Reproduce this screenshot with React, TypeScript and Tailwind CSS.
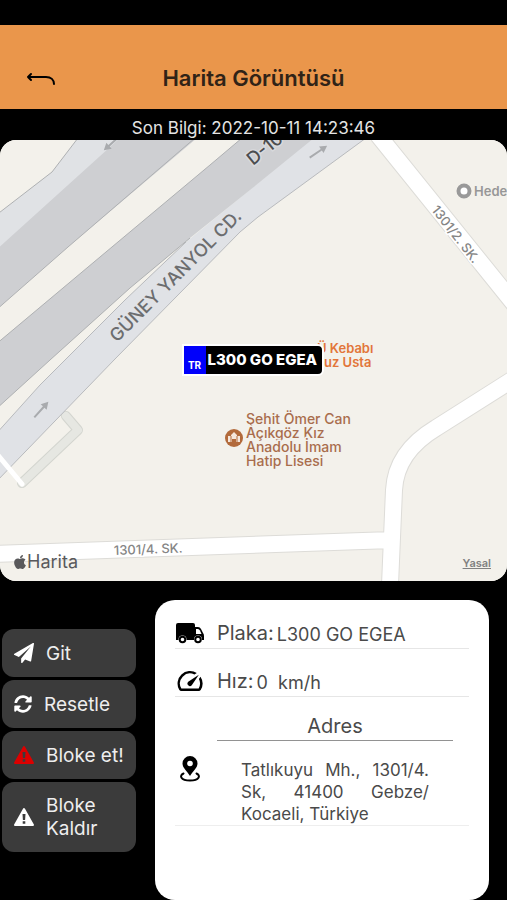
import type { ReactNode } from 'react'
import { FaSyncAlt } from 'react-icons/fa'
import { MdSpeed } from 'react-icons/md'

interface Vehicle {
  plate: string
  country: string
  speed: number
  address: string[]
  updatedAt: string
}

const vehicle: Vehicle = {
  plate: 'L300 GO EGEA',
  country: 'TR',
  speed: 0,
  address: ['Tatlıkuyu Mh., 1301/4.', 'Sk, 41400 Gebze/', 'Kocaeli, Türkiye'],
  updatedAt: '2022-10-11 14:23:46',
}

function MapArrow({ x, y, angle }: { x: number; y: number; angle: number }) {
  return (
    <g transform={`translate(${x} ${y}) rotate(${angle})`} fill="#a9abae">
      <path d="M-10-1H4v-3L11 0 4 4V1H-10z" />
    </g>
  )
}

function StreetMap() {
  return (
    <svg
      viewBox="0 0 507 441"
      preserveAspectRatio="xMidYMid slice"
      className="block h-full w-full"
      fontFamily="Inter, sans-serif"
      aria-hidden="true"
    >
      <rect width="507" height="441" fill="#f3f1eb" />

      {/* northern carriageway with its slip road */}
      <path d="M-5 76L52 32 78-2h70L-5 117z" fill="#e0e2e5" />
      <path d="M-5 111L120 -2h77L68 107-5 171z" fill="#cecfd2" />
      <path d="M-5 76L52 32 78-2M-5 171L68 107 195-2" fill="none" stroke="#aeb0b2" />

      {/* parking lane */}
      <path d="M66 276L78 290 22 343" fill="none" stroke="#d3d5cf" strokeWidth="10" strokeLinejoin="round" strokeLinecap="round" />
      <path d="M66 276L78 290 22 343" fill="none" stroke="#e6e7e2" strokeWidth="8" strokeLinejoin="round" strokeLinecap="round" />

      {/* Güney Yanyol */}
      <path d="M-5 295L40 245 70 215 125 160 186 102 313-2h53L258 77 240 92 115 219-5 343z" fill="#e0e2e6" />
      <path d="M366-2L258 77 240 92 115 219-5 343M-5 295L40 245 70 215 125 160 186 102" fill="none" stroke="#b8babd" />

      {/* D-100 */}
      <path d="M-5 205L100 117 210 25 242-2h72L250 50 190 98 130 148 50 220-5 270z" fill="#cecfd2" />
      <path d="M-5 205L100 117 210 25 242-2M-5 270L50 220 130 148 190 98" fill="none" stroke="#aeb0b2" />

      <path d="M-3 314L22 344" stroke="#fff" strokeWidth="5" strokeLinecap="round" />

      {/* side streets */}
      <g fill="none" strokeLinejoin="round">
        <path d="M378-5L515 165M515 238L436 288Q396 312 394 350L390 445M-5 414L392 400" stroke="#dddcd8" strokeWidth="18" />
        <path d="M378-5L515 165M515 238L436 288Q396 312 394 350L390 445M-5 414L392 400" stroke="#fff" strokeWidth="16" />
      </g>

      <MapArrow x={112} y={3} angle={138} />
      <MapArrow x={318} y={12} angle={-34} />
      <MapArrow x={41} y={270} angle={-48} />

      <g stroke="#f3f1eb" strokeWidth="3" paintOrder="stroke">
        <text transform="translate(117 203) rotate(-45)" fontSize="18" fontWeight="500" fill="#6c6d6f" stroke="#e0e2e6">
          GÜNEY YANYOL CD.
        </text>
        <text transform="translate(253 26) rotate(-39)" fontSize="18" fontWeight="500" fill="#4c4d4f" stroke="#d8d9dc">
          D-100
        </text>
        <text transform="translate(431 70) rotate(52)" fontSize="13" fontWeight="500" fill="#858585" stroke="#fff">
          1301/2. SK.
        </text>
        <text transform="translate(114 415) rotate(-2)" fontSize="13" fontWeight="500" fill="#858585" stroke="#fff">
          1301/4. SK.
        </text>
        <text x="474" y="56" fontSize="13" fontWeight="600" fill="#979797">Hedef</text>
        <g fontSize="13" fontWeight="600" fill="#e2763a">
          <text x="317" y="213">Ü Kebabı</text>
          <text x="324" y="227">uz Usta</text>
        </g>
        <g fontSize="14" fontWeight="500" fill="#a96d4d">
          <text x="246" y="284">Şehit Ömer Can</text>
          <text x="246" y="298">Açıkgöz Kız</text>
          <text x="246" y="312">Anadolu İmam</text>
          <text x="246" y="326">Hatip Lisesi</text>
        </g>
      </g>

      <circle cx="464" cy="51" r="5.5" fill="#fff" stroke="#999" strokeWidth="4" />
      <circle cx="234" cy="298" r="9" fill="#b26a3b" />
      <path d="M228 302v-6h3v-1l3-3 3 3v1h3v6h-4v-3h-4v3z" fill="#f5e7dc" />
      <path d="M231 296v6M237 296v6" stroke="#b26a3b" />
    </svg>
  )
}

function AppleMark() {
  return (
    <svg viewBox="0 0 384 512" className="h-4 w-3" fill="currentColor" aria-hidden="true">
      <path d="M318.7 268.7c-.2-36.7 16.4-64.4 50-84.8-18.8-26.9-47.2-41.7-84.7-44.6-35.5-2.8-74.3 20.7-88.5 20.7-15 0-49.4-19.7-76.4-19.7C63.3 141.2 4 184.8 4 273.5q0 39.3 14.4 81.2c12.8 36.7 59 126.7 107.2 125.2 25.2-.6 43-17.9 75.8-17.9 31.8 0 48.3 17.9 76.4 17.9 48.6-.7 90.4-82.5 102.6-119.3-65.2-30.7-61.7-90-61.7-91.9zm-56.6-164.2c27.3-32.4 24.8-61.9 24-72.5-24.1 1.4-52 16.4-67.9 34.9-17.5 19.8-27.8 44.3-25.6 71.9 26.1 2 49.9-11.4 69.5-34.3z" />
    </svg>
  )
}

function PlaneIcon() {
  return (
    <svg viewBox="0 0 1792 1792" className="h-5 w-5" fill="currentColor" aria-hidden="true">
      <path d="M1764 11q33 24 27 64l-256 1536q-5 29-32 45-14 8-31 8-11 0-24-5l-453-185-242 295q-18 23-49 23-13 0-22-4-19-7-30.500-23.500t-11.500-36.500v-349l864-1059-1069 925-395-162q-37-14-40-55-2-40 32-59l1664-960q15-9 32-9 20 0 36 11z" />
    </svg>
  )
}

function WarningIcon() {
  return (
    <svg viewBox="0 0 20 20" className="h-5 w-5" aria-hidden="true">
      <path d="M10 2L19 18H1z" fill="currentColor" stroke="currentColor" strokeWidth="2" strokeLinejoin="round" />
      <path d="M8.500 7h3l-.4 6H8.900zM8.700 14.300h2.600v2.400H8.700z" fill="#3b3b3b" />
    </svg>
  )
}

function TruckIcon() {
  return (
    <svg viewBox="0 0 30 24" className="h-6 w-[30px] shrink-0" aria-hidden="true">
      <path d="M3 2h15q2 0 2 2v2h3q2 0 3 2l2 4q1 1 1 3v4H1V4q0-2 2-2z" />
      <path d="M21 8h2q1 0 2 1.500L26.500 13H21z" fill="#fff" />
      <circle cx="7.500" cy="18.500" r="4" fill="#fff" />
      <circle cx="23" cy="18.500" r="4" fill="#fff" />
      <circle cx="7.500" cy="18.500" r="2.800" fill="#fff" stroke="#000" strokeWidth="2" />
      <circle cx="23" cy="18.500" r="2.800" fill="#fff" stroke="#000" strokeWidth="2" />
    </svg>
  )
}

function PinIcon() {
  return (
    <svg viewBox="0 0 30 30" className="h-[30px] w-[30px] shrink-0" aria-hidden="true">
      <path d="M15 2a7.500 7.500 0 0 1 7.500 7.500C22.500 14 18 17 15 22 12 17 7.500 14 7.500 9.500A7.500 7.500 0 0 1 15 2z" />
      <circle cx="15" cy="9.500" r="2.800" fill="#fff" />
      <path d="M8.500 19.500C4 21.500 5.500 26.500 15 26.500s11-5 6.500-7" fill="none" stroke="#000" strokeWidth="2" strokeLinecap="round" />
    </svg>
  )
}

function ActionButton({ icon, children }: { icon: ReactNode; children: ReactNode }) {
  return (
    <button
      type="button"
      className="flex min-h-12 w-full items-center gap-3 rounded-xl bg-[#3b3b3b] py-3 pl-3 text-left text-[19px] leading-[23px] text-[#eeeeee]"
    >
      <span className="shrink-0 text-white">{icon}</span>
      <span>{children}</span>
    </button>
  )
}

function InfoRow({ icon, label, value }: { icon: ReactNode; label: string; value: string }) {
  return (
    <div className="flex h-[33px] items-center gap-3 border-b border-[#e6e6e6] pt-0.5">
      {icon}
      <p className="flex items-end gap-[3px]">
        <span className="text-xl leading-8">{label}:</span>
        <span className="text-lg leading-7 whitespace-pre">{value}</span>
      </p>
    </div>
  )
}

export default function App() {
  return (
    <div className="flex min-h-screen flex-col bg-black pt-[25px] font-['Inter',sans-serif]">
      <header className="grid h-[84px] grid-cols-[1fr_auto_1fr] items-end bg-[#ea964b] px-[26px] pb-[15px]">
        <button type="button" aria-label="Geri" className="flex h-8 w-8 items-center text-black">
          <svg viewBox="0 0 30 16" className="h-4 w-[30px]" fill="none" stroke="currentColor" strokeWidth="2" strokeLinecap="round" strokeLinejoin="round" aria-hidden="true">
            <path d="M5 4L2 7l3 3M2 7h18c5 0 8 3 8 7" />
          </svg>
        </button>
        <h1 className="text-[22px] leading-8 font-semibold text-[#302317]">Harita Görüntüsü</h1>
      </header>

      <p className="pt-[7px] text-center text-[17px] leading-6 text-[#e4e4e4]">Son Bilgi: {vehicle.updatedAt}</p>

      <section aria-label="Harita" className="relative h-[441px] overflow-hidden rounded-[16px] bg-[#f3f1eb]">
        <StreetMap />
        <div className="absolute top-[204px] left-1/2 flex h-8 -translate-x-[72px] overflow-hidden rounded-md rounded-l-none border-2 border-white bg-black">
          <span className="flex w-[22px] items-end justify-center bg-[#0000fb] pb-[3px] text-[10px] leading-3 font-bold text-white">
            {vehicle.country}
          </span>
          <span className="pr-[5px] pl-0.5 text-[15px] leading-7 font-extrabold whitespace-nowrap text-white">{vehicle.plate}</span>
        </div>
        <div className="absolute bottom-[7px] left-[14px] flex items-center gap-px text-lg leading-6 text-[#59595b]">
          <AppleMark />
          Harita
        </div>
        <a href="#yasal" className="absolute right-4 bottom-2 text-[11px] leading-5 font-semibold text-[#818181] underline">
          Yasal
        </a>
      </section>

      <main className="flex grow gap-[19px] pt-[19px] pr-[18px] pl-[2px]">
        <nav aria-label="Araç işlemleri" className="flex w-[134px] shrink-0 flex-col gap-[3px] pt-[29px]">
          <ActionButton icon={<PlaneIcon />}>Git</ActionButton>
          <ActionButton icon={<FaSyncAlt size={18} />}>Resetle</ActionButton>
          <ActionButton icon={<span className="text-[#dc0000]"><WarningIcon /></span>}>Bloke et!</ActionButton>
          <ActionButton icon={<WarningIcon />}>Bloke Kaldır</ActionButton>
        </nav>

        <section aria-label="Araç bilgileri" className="flex grow flex-col gap-[15px] rounded-[20px] bg-white px-5 pt-4 text-[#4a4a4a]">
          <InfoRow icon={<TruckIcon />} label="Plaka" value={vehicle.plate} />
          <InfoRow
            icon={<MdSpeed size={30} className="shrink-0 text-black" />}
            label="Hız"
            value={`${vehicle.speed}  km/h`}
          />
          <div className="flex items-center gap-3 border-b border-[#eeeeee]">
            <PinIcon />
            <div className="grow pr-4">
              <h2 className="border-b border-[#929292] text-center text-xl leading-7">Adres</h2>
              <address className="pt-[18px] pr-6 pl-6 text-[17px] leading-[22px] not-italic">
                {vehicle.address.map((line) => (
                  <span key={line} className="block text-justify [text-align-last:justify] last:[text-align-last:left]">
                    {line}
                  </span>
                ))}
              </address>
            </div>
          </div>
        </section>
      </main>
    </div>
  )
}
